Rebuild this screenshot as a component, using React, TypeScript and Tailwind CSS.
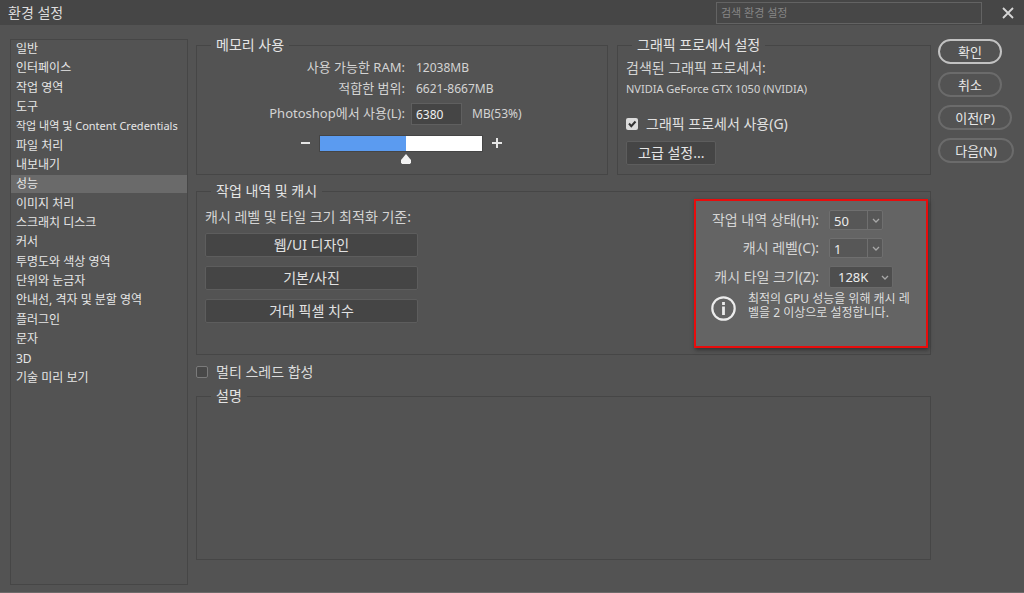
import React from 'react';

const categories = [
  '일반',
  '인터페이스',
  '작업 영역',
  '도구',
  '작업 내역 및 Content Credentials',
  '파일 처리',
  '내보내기',
  '성능',
  '이미지 처리',
  '스크래치 디스크',
  '커서',
  '투명도와 색상 영역',
  '단위와 눈금자',
  '안내선, 격자 및 분할 영역',
  '플러그인',
  '문자',
  '3D',
  '기술 미리 보기',
];

const presets = ['웹/UI 디자인', '기본/사진', '거대 픽셀 치수'];

interface GroupProps {
  title: string;
  className?: string;
  children?: React.ReactNode;
}

const Group: React.FC<GroupProps> = ({ title, className = '', children }) => (
  <fieldset className={`min-w-0 border border-[#464646] ${className}`}>
    <legend className="ml-3.5 px-[5px] h-4 leading-4 text-sm text-[#e4e4e4]">{title}</legend>
    {children}
  </fieldset>
);

interface ComboProps {
  id: string;
  value: string;
  split?: boolean;
}

const Combo: React.FC<ComboProps> = ({ id, value, split }) => (
  <div className={split ? 'relative w-[54px]' : 'relative w-16'}>
    <select
      id={id}
      defaultValue={value}
      className={`block w-full appearance-none rounded-xs border text-[13px] text-[#ececec] ${
        split ? 'h-5 pl-1 bg-[#575757] border-[#6f6f6f]' : 'h-[22px] pl-2 bg-[#4e4e4e] border-[#6a6a6a]'
      }`}
    >
      <option>{value}</option>
    </select>
    <div
      className={`absolute inset-y-0 right-0 w-4 flex items-center justify-center pointer-events-none ${
        split ? 'border-l border-[#6f6f6f]' : ''
      }`}
    >
      <svg width="8" height="5" viewBox="0 0 8 5" fill="none" stroke="#a8a8a8" strokeWidth="1.3">
        <path d="M1 1l3 3 3-3" />
      </svg>
    </div>
  </div>
);

const App: React.FC = () => {
  return (
    <div className="min-h-screen flex flex-col bg-[#535353] border-b border-[#6d6a6a] font-['Noto_Sans','Noto_Sans_CJK_KR',sans-serif] text-[#d4d4d4]">
      <header className="h-[25px] shrink-0 flex items-center bg-[#464646] pl-2 pr-2.5">
        <h1 className="flex-1 text-sm leading-4 text-[#dedede]">환경 설정</h1>
        <input
          type="text"
          aria-label="검색 환경 설정"
          placeholder="검색 환경 설정"
          className="w-[266px] h-[22px] px-1 bg-[#474747] border border-[#636363] text-[11px] placeholder:text-[#868686]"
        />
        <button aria-label="닫기" className="ml-5">
          <svg width="12" height="12" viewBox="0 0 12 12" fill="none" stroke="#d6d6d6" strokeWidth="1.8">
            <path d="M1 1l10 10M11 1L1 11" />
          </svg>
        </button>
      </header>

      <div className="flex-1 flex pl-2.5 pr-2.5">
        <nav className="w-[178px] shrink-0 mt-3.5 mb-[7px] border border-[#464646]">
          <ul className="h-[347px] flex flex-col justify-between">
            {categories.map((name) => (
              <li key={name}>
                <a
                  href="#"
                  className={`block h-[18px] pl-[5px] leading-[18px] whitespace-nowrap text-[#e6e6e6] ${
                    name.includes('Content') ? 'text-[11px]' : 'text-xs'
                  } ${name === '성능' ? 'bg-[#6a6a6a]' : ''}`}
                >
                  {name}
                </a>
              </li>
            ))}
          </ul>
        </nav>

        <main className="flex-1 min-w-0 flex flex-col ml-2 mr-[7px] pt-3 pb-8">
          <div className="grid grid-cols-[412fr_314fr] gap-x-[9px]">
            <Group title="메모리 사용" className="h-[138px]">
              <div className="grid grid-cols-[208px_1fr] gap-x-1.5 items-center pt-1 text-[13px]">
                <span className="h-[21px] leading-[21px] text-right">사용 가능한 RAM:</span>
                <span className="pl-[5px] text-xs">12038MB</span>
                <span className="h-[21px] leading-[21px] text-right">적합한 범위:</span>
                <span className="pl-[5px] text-xs">6621-8667MB</span>
                <label htmlFor="ram" className="mt-1 text-right">
                  Photoshop에서 사용(L):
                </label>
                <div className="mt-1 flex items-center gap-2.5 text-xs">
                  <input
                    id="ram"
                    type="text"
                    defaultValue="6380"
                    className="w-[51px] h-[22px] pl-1 bg-[#454545] border border-[#5f5f5f] text-[#f0f0f0]"
                  />
                  MB(53%)
                </div>
              </div>
              <div className="mt-2.5 ml-[104px] flex items-start gap-2">
                <button aria-label="줄이기" className="h-4">
                  <svg width="10" height="10" viewBox="0 0 10 10" stroke="#e6e6e6" strokeWidth="2">
                    <path d="M0 5h9" />
                  </svg>
                </button>
                <div className="relative w-[164px]">
                  <div className="flex h-[17px] border border-[#454545] bg-white">
                    <div className="bg-[#5b9bf0]" style={{ width: '53%' }} />
                  </div>
                  <input
                    type="range"
                    aria-label="메모리 사용량"
                    defaultValue={53}
                    className="absolute inset-0 w-full opacity-0"
                  />
                  <svg className="absolute top-[19px] left-[53%] -translate-x-1/2" width="10" height="10" viewBox="0 0 10 10">
                    <path d="M5 0L10 6V8.500L9 10H1L0 8.500V6z" fill="#f2f2f2" />
                  </svg>
                </div>
                <button aria-label="늘리기" className="h-4">
                  <svg width="11" height="10" viewBox="0 0 11 10" stroke="#e6e6e6" strokeWidth="2">
                    <path d="M1 5h10M6 0v10" />
                  </svg>
                </button>
              </div>
            </Group>

            <Group title="그래픽 프로세서 설정" className="h-[138px]">
              <div className="flex flex-col items-start pl-2 pt-1">
                <p className="text-sm leading-[21px]">검색된 그래픽 프로세서:</p>
                <p className="text-[11px] leading-[21px]">NVIDIA GeForce GTX 1050 (NVIDIA)</p>
                <label className="mt-4 flex items-center gap-2 text-sm leading-[18px] text-[#e0e0e0]">
                  <span className="relative flex">
                    <input type="checkbox" defaultChecked className="appearance-none size-3 rounded-xs bg-[#dcdcdc]" />
                    <svg className="absolute inset-0" width="12" height="12" viewBox="0 0 12 12" fill="none" stroke="#333" strokeWidth="2">
                      <path d="M3 5.500l2.300 2.700L9.500 3.500" />
                    </svg>
                  </span>
                  그래픽 프로세서 사용(G)
                </label>
                <button className="mt-2 h-6 px-[11px] rounded-xs border border-[#5d5d5d] bg-[#454545] text-sm leading-4 text-[#e6e6e6]">
                  고급 설정...
                </button>
              </div>
            </Group>
          </div>

          <Group title="작업 내역 및 캐시" className="mt-2 h-[172px]">
            <div className="flex justify-between">
              <div className="pl-2 pt-2 w-[221px]">
                <p className="text-sm leading-5 whitespace-nowrap">캐시 레벨 및 타일 크기 최적화 기준:</p>
                <div className="mt-1.5 flex flex-col gap-[9px]">
                  {presets.map((preset) => (
                    <button
                      key={preset}
                      className="h-6 rounded-xs border border-[#5d5d5d] bg-[#454545] text-sm leading-4 text-[#e2e2e2]"
                    >
                      {preset}
                    </button>
                  ))}
                </div>
              </div>

              <div className="w-[234px] h-[149px] mr-0.5 border-2 border-[#e80c0c] bg-[#646464] pt-[9px] shadow-[1px_2px_4px_#333]">
                <div className="grid grid-cols-[123px_1fr] gap-x-2.5 gap-y-2 items-center text-sm leading-5">
                  <label htmlFor="history" className="text-right">작업 내역 상태(H):</label>
                  <Combo id="history" value="50" split />
                  <label htmlFor="levels" className="text-right">캐시 레벨(C):</label>
                  <Combo id="levels" value="1" split />
                  <label htmlFor="tile" className="text-right">캐시 타일 크기(Z):</label>
                  <Combo id="tile" value="128K" />
                </div>
                <div className="mt-1 ml-[15px] flex gap-3">
                  <svg className="mt-1 shrink-0" width="25" height="25" viewBox="0 0 25 25" fill="none" stroke="#ececec">
                    <circle cx="12.500" cy="12.500" r="11.200" strokeWidth="2.200" />
                    <path d="M12.500 10.500v8.500M12.500 6v3" strokeWidth="2.800" />
                  </svg>
                  <p className="text-xs leading-[14px] whitespace-nowrap text-[#dedede]">
                    최적의 GPU 성능을 위해 캐시 레
                    <br />벨을 2 이상으로 설정합니다.
                  </p>
                </div>
              </div>
            </div>
          </Group>

          <label className="mt-2 self-start flex items-center gap-2 text-sm leading-[18px] text-[#dcdcdc]">
            <input type="checkbox" className="appearance-none size-3 rounded-xs border border-[#7a7a7a] bg-[#484848]" />
            멀티 스레드 합성
          </label>

          <Group title="설명" className="mt-[7px] flex-1" />
        </main>

        <div className="w-[76px] shrink-0 mt-3.5 flex flex-col items-start gap-2 text-[13px] leading-4 text-[#e8e8e8]">
          <button className="w-16 h-[25px] rounded-full border-2 border-[#c2c2c2]">확인</button>
          <button className="w-16 h-[25px] rounded-full border-2 border-[#6b6b6b]">취소</button>
          <button className="w-[74px] h-[25px] rounded-full border-2 border-[#6b6b6b]">이전(P)</button>
          <button className="w-[76px] h-[25px] rounded-full border-2 border-[#6b6b6b]">다음(N)</button>
        </div>
      </div>
    </div>
  );
};

export default App;
